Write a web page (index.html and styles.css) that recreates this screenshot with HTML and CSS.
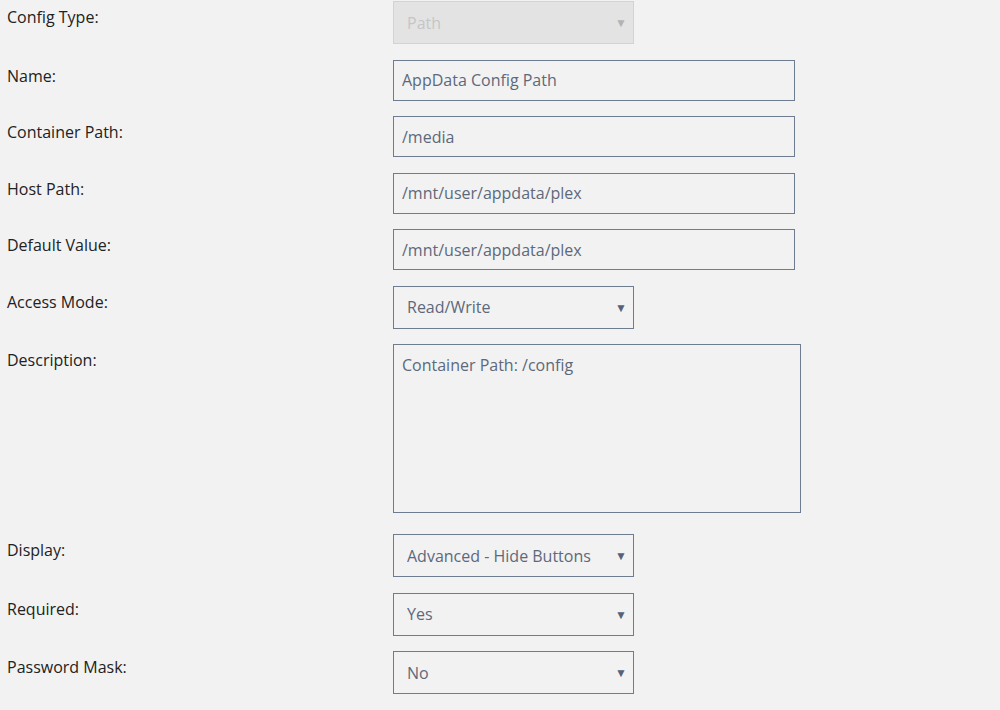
FILE: index.html
```html
<html lang="en">
    <head>
        <title>Edit Configuration</title>
        <link rel="stylesheet" href="styles.css">
    </head>
    <body>
        <form id="config-form">
            <div class="row">
                <label>Config Type:</label>
                <div class="selectbox disabled">
                    <select disabled><option>Path</option></select>
                </div>
            </div>
            <div class="row">
                <label>Name:</label>
                <input type="text" value="AppData Config Path">
            </div>
            <div class="row">
                <label>Container Path:</label>
                <input type="text" value="/media">
            </div>
            <div class="row">
                <label>Host Path:</label>
                <input type="text" value="/mnt/user/appdata/plex">
            </div>
            <div class="row">
                <label>Default Value:</label>
                <input type="text" value="/mnt/user/appdata/plex">
            </div>
            <div class="row">
                <label>Access Mode:</label>
                <div class="selectbox">
                    <select><option>Read/Write</option><option>Read Only</option></select>
                </div>
            </div>
            <div class="row tall">
                <label>Description:</label>
                <textarea>Container Path: /config</textarea>
            </div>
            <div class="row">
                <label>Display:</label>
                <div class="selectbox">
                    <select><option>Advanced - Hide Buttons</option><option>Always</option></select>
                </div>
            </div>
            <div class="row">
                <label>Required:</label>
                <div class="selectbox">
                    <select><option>Yes</option><option>No</option></select>
                </div>
            </div>
            <div class="row">
                <label>Password Mask:</label>
                <div class="selectbox">
                    <select><option>No</option><option>Yes</option></select>
                </div>
            </div>
        </form>
    </body>
</html>
```

FILE: styles.css
```css
body{
    margin:0;
    padding:1px 0 0 7px;
    background-color:#f2f2f2;
    font-family:"Open Sans", "Noto Sans", sans-serif;
    font-size:16px;
    color:#222;
}
#config-form{
    display:flex;
    flex-direction:column;
    gap:15.5px;
}
.row{
    display:flex;
    align-items:flex-start;
}
.row.tall{
    margin-bottom:5.5px;
}
label{
    width:386px;
    flex:none;
    padding-top:7px;
    line-height:18px;
}
input, textarea, select{
    font-family:inherit;
    font-size:16px;
    color:#5d697b;
    background-color:#f2f2f2;
    border:1px solid #6e7c90;
    border-radius:0;
    outline:none;
    margin:0;
    box-sizing:border-box;
}
input{
    width:402px;
    height:41px;
    padding:0 8px;
}
textarea{
    width:408px;
    height:169px;
    padding:10px 8px;
    resize:none;
    line-height:20px;
}
.selectbox{
    position:relative;
    width:241px;
}
.selectbox select{
    appearance:none;
    -webkit-appearance:none;
    width:100%;
    height:43px;
    padding:0 13px;
}
.selectbox::after{
    content:"\25BC";
    position:absolute;
    right:7px;
    top:0;
    bottom:0;
    display:flex;
    align-items:center;
    font-size:12px;
    color:#56627a;
    pointer-events:none;
}
.selectbox.disabled select{
    background-color:#dedede;
    border-color:#c6c6c6;
    color:#b3b3b3;
}
.selectbox.disabled::after{
    color:#b3b3b3;
}
```
